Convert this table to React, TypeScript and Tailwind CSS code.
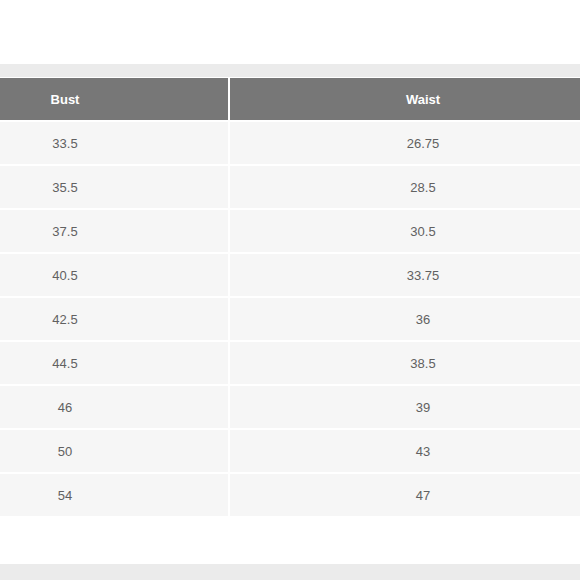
import React from 'react';

const rows: [string, string][] = [
  ['33.5', '26.75'],
  ['35.5', '28.5'],
  ['37.5', '30.5'],
  ['40.5', '33.75'],
  ['42.5', '36'],
  ['44.5', '38.5'],
  ['46', '39'],
  ['50', '43'],
  ['54', '47'],
];

export default function App() {
  return (
    <div className="w-[580px] h-[580px] overflow-hidden bg-white flex flex-col" style={{ fontFamily: '"Liberation Sans", Arial, sans-serif' }}>
      <div className="h-[64px] shrink-0" />
      <div className="h-[13px] shrink-0 bg-[#ebebeb]" />
      <div className="h-[1px] shrink-0" />
      <div className="-ml-[98px] w-[714px] flex flex-col gap-[2px]">
        {/* header */}
        <div className="flex gap-[2px] h-[42px]">
          <div className="w-[326px] bg-[#777777] flex items-center justify-center pt-[2px] text-white font-bold text-[13px]">Bust</div>
          <div className="w-[386px] bg-[#777777] flex items-center justify-center pt-[2px] text-white font-bold text-[13px]">Waist</div>
        </div>
        {rows.map(([bust, waist], i) => (
          <div key={i} className="flex gap-[2px] h-[42px]">
            <div className="w-[326px] bg-[#f6f6f6] flex items-center justify-center pt-[2px] text-[#616161] text-[13px]">{bust}</div>
            <div className="w-[386px] bg-[#f6f6f6] flex items-center justify-center pt-[2px] text-[#616161] text-[13px]">{waist}</div>
          </div>
        ))}
      </div>
      <div className="flex-1" />
      <div className="h-[16px] shrink-0 bg-[#ebebeb]" />
    </div>
  );
}
